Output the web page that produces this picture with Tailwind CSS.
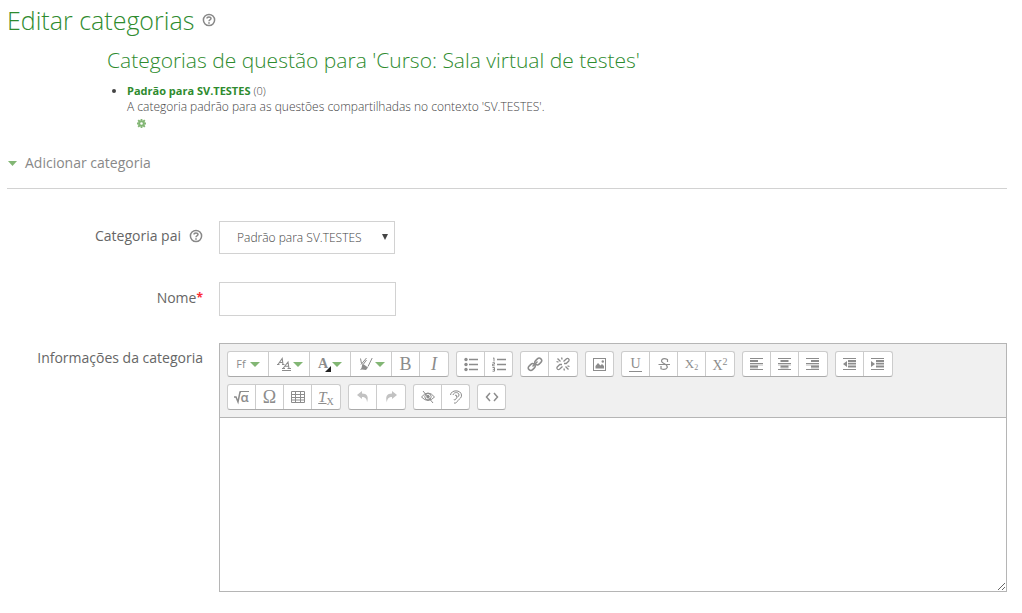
<!DOCTYPE html>
<html lang="pt-BR">
<head>
<meta charset="utf-8">
<meta name="viewport" content="width=device-width, initial-scale=1">
<title>Editar categorias</title>
<script src="https://cdn.jsdelivr.net/npm/@tailwindcss/browser@4"></script>
</head>
<body class="bg-white pl-[7px] pr-[15px] pt-1 font-['Century_Gothic','Open_Sans',sans-serif] font-light text-[#444]">
<svg class="hidden">
  <symbol id="help" viewBox="0 0 14 14"><circle cx="7" cy="7" r="5.600" fill="none" stroke="#888" stroke-width="1.500"/><path d="M5 5.600C5 3.400 9 3.400 9 5.500C9 7 7 6.800 7 8.200" fill="none" stroke="#888" stroke-width="1.500"/><path d="M6.200 9.200h1.600v1.500H6.200z" fill="#888"/></symbol>
</svg>
<main>
  <div class="flex items-center gap-2">
    <h1 class="text-[25px] leading-8 text-[#2e8b2e]">Editar categorias</h1>
    <button type="button" aria-label="Ajuda com Editar categorias"><svg class="size-[14px]"><use href="#help"/></svg></button>
  </div>
  <section class="ml-[100px] mt-2">
    <h2 class="text-[21px] leading-8 text-[#2e8b2e]">Categorias de questão para 'Curso: Sala virtual de testes'</h2>
    <ul class="mt-[7px] list-disc pl-5 text-[12px] leading-4">
      <li><a href="#" class="text-[11px] font-bold text-[#2e8b2e]">Padrão para SV.TESTES</a> <span class="text-[11px]">(0)</span>
        <p>A categoria padrão para as questões compartilhadas no contexto 'SV.TESTES'.</p>
        <a href="#" aria-label="Editar" class="ml-[10px] mt-1 block w-[9px]"><svg class="size-[9px]" viewBox="0 0 9 9"><circle cx="4.500" cy="4.500" r="2.300" fill="none" stroke="#82b674" stroke-width="2"/><path d="M4.500 0v1.800M4.500 7.200V9M0 4.500h1.800M7.200 4.500H9M1.200 1.200l1.300 1.300M6.500 6.500l1.300 1.300M7.800 1.200L6.500 2.500M2.500 6.500L1.200 7.800" stroke="#82b674" stroke-width="1.800"/></svg></a>
      </li>
    </ul>
  </section>
  <form>
    <h3 class="mt-[25px] border-b border-[#d2d2d2] pb-[15px]">
      <button type="button" class="flex items-center gap-2 text-[14px] font-normal leading-5 text-[#888]"><svg class="ml-px h-[5px] w-[9px]" viewBox="0 0 9 5"><path d="M0 0h9L4.500 5z" fill="#82b674"/></svg>Adicionar categoria</button>
    </h3>
    <div class="mt-8 grid grid-cols-[196px_minmax(0,1fr)] gap-x-4 text-[14px] leading-5">
      <div class="flex h-[33px] items-center justify-end gap-2 pb-[3px]">
        <label for="parent" class="font-normal text-[#666]">Categoria pai</label>
        <button type="button" aria-label="Ajuda com Categoria pai"><svg class="size-[14px]"><use href="#help"/></svg></button>
      </div>
      <div class="relative h-[33px] w-[176px]">
        <select id="parent" class="h-full w-full appearance-none border border-[#d2d2d2] bg-white pl-[17px] text-[12px]"><option>Padrão para SV.TESTES</option></select>
        <svg class="pointer-events-none absolute right-[7px] top-[13px] h-[6px] w-[6px]" viewBox="0 0 6 6"><path d="M0 0h6L3 6z" fill="#444"/></svg>
      </div>
      <label for="name" class="mt-7 flex h-[34px] items-center justify-end pb-[3px] font-normal text-[#666]">Nome<span class="text-[12px] font-bold text-red-500">*</span></label>
      <input id="name" type="text" class="mt-7 h-[34px] w-[177px] border border-[#d2d2d2] px-2">
      <label for="info" class="mt-8 text-right font-normal text-[#666]">Informações da categoria</label>
      <div class="mt-[27px] border border-[#b5b5b5]">
        <div class="flex h-[74px] flex-wrap content-start gap-[7px] border-b border-[#b5b5b5] bg-[#f0f0f0] p-[7px] text-[#8c8c8c] [&>div]:flex [&>div]:h-[26px] [&>div]:divide-x [&>div]:divide-[#ccc] [&>div]:rounded-[3px] [&>div]:border [&>div]:border-[#ccc] [&>div]:border-b-[#aaa] [&>div]:bg-white [&_button]:flex [&_button]:w-7 [&_button]:items-center [&_button]:justify-center [&_svg]:h-4 [&_svg]:w-4 [&_svg]:shrink-0 [&_svg]:fill-none [&_svg]:stroke-current">
          <div>
            <button type="button" aria-label="Família de fontes" class="min-w-[41px] gap-1"><span class="text-[11px] font-normal">Ff</span><svg class="max-h-[5px] max-w-[10px]" viewBox="0 0 10 5"><path d="M0 0h10L5 5z" fill="#82b674" stroke="none"/></svg></button>
            <button type="button" aria-label="Tamanho da fonte" class="min-w-[41px] gap-px"><svg class="min-w-[14px]" viewBox="0 0 14 16"><path d="M1 8.500L5.200 2.500l.8 6M2.500 6.500h3.300M0 8.500h2.500M5 8.500h2.500M6 12.500l5-6.500 1 6.500M8 10.200h3.800M5 12.500h3M10.500 12.500H14M5 14.500h9" stroke-width="1.100"/></svg><svg class="max-h-[5px] max-w-[10px]" viewBox="0 0 10 5"><path d="M0 0h10L5 5z" fill="#82b674" stroke="none"/></svg></button>
            <button type="button" aria-label="Cor do texto" class="min-w-[41px] gap-px"><span class="flex items-end font-['Liberation_Serif'] text-[14px] font-bold leading-4">A<svg class="-ml-[3px] max-h-[6px] max-w-[6px]" viewBox="0 0 6 6"><path d="M6 0v6H0z" fill="#222" stroke="none"/></svg></span><svg class="max-h-[5px] max-w-[10px]" viewBox="0 0 10 5"><path d="M0 0h10L5 5z" fill="#82b674" stroke="none"/></svg></button>
            <button type="button" aria-label="Cor de fundo" class="min-w-[41px] gap-px"><svg class="min-w-[14px]" viewBox="0 0 14 16"><path d="M1.500 2.500l1 5M2 8.500L7.500 2M4.500 8l3-4M9 10.500L13.200 2"/><path d="M3.500 7.500l5.500 4L7 14l-4-.5L1 14l1.500-2z" fill="currentColor" stroke="none"/></svg><svg class="max-h-[5px] max-w-[10px]" viewBox="0 0 10 5"><path d="M0 0h10L5 5z" fill="#82b674" stroke="none"/></svg></button>
            <button type="button" class="font-['Liberation_Serif'] text-[18px] font-normal">B</button>
            <button type="button" class="font-['Liberation_Serif'] text-[18px] font-normal italic">I</button>
          </div>
          <div>
            <button type="button" aria-label="Lista com marcadores"><svg viewBox="0 0 16 16"><path d="M6 3.500h9M6 8.500h9M6 13.500h9" stroke-width="1.400"/><g fill="currentColor" stroke="none"><circle cx="3" cy="3.500" r="1.700"/><circle cx="3" cy="8.500" r="1.700"/><circle cx="3" cy="13.500" r="1.700"/></g></svg></button>
            <button type="button" aria-label="Lista numerada" class="max-w-[27px]"><svg viewBox="0 0 16 16"><path d="M6 3.500h9M6 8.500h9M6 13.500h9" stroke-width="1.400"/><path d="M2 2.500l1-.7V5.500M1.500 6.700h2v1.500h-2v1.600h2.200M1.500 11.500h2v3.700h-2M1.800 13.300h1.700"/></svg></button>
          </div>
          <div>
            <button type="button" aria-label="Link"><svg viewBox="0 0 16 16" stroke-width="1.500"><rect x="7.500" y="3" width="7.500" height="5" rx="2.500" transform="rotate(-45 11.250 5.500)"/><rect x="1" y="8.500" width="7.500" height="5" rx="2.500" transform="rotate(-45 4.750 11)"/><path d="M5.500 10.500l5-5"/></svg></button>
            <button type="button" aria-label="Remover link"><svg viewBox="0 0 16 16" stroke-width="1.300"><path d="M8.500 5.500l3-2.700q1-.7 2 0 1.200 1 .3 2.200l-2.600 2.500H9M7.500 10.500l-3 2.700q-1 .7-2 0-1.200-1-.3-2.200l2.600-2.500H7"/><path d="M2.500 2.500l3 3M6.500 1.500l.7 2M1.500 5.500l2 .7M13.500 13.500l-3-3M9.500 14.500l-.7-2M14.500 10.500l-2-.7"/></svg></button>
          </div>
          <div>
            <button type="button" aria-label="Imagem" class="max-w-[27px]"><svg viewBox="0 0 16 16"><rect x="1.500" y="2.500" width="12" height="12"/><path d="M3.500 12.500V10l2.500-3 2.500 2.500L10 8l2 2v2.500z" fill="currentColor" stroke="none"/><circle cx="10.800" cy="5.500" r="1.200" fill="currentColor" stroke="none"/></svg></button>
          </div>
          <div>
            <button type="button" aria-label="Sublinhado"><span class="border-b border-current px-px font-['Liberation_Serif'] text-[14px] font-normal leading-[14px]">U</span></button>
            <button type="button" aria-label="Tachado"><svg viewBox="0 0 16 16"><path d="M11.500 6V3.500Q8 1.700 6 3.500q-1.500 2.500 2 4t3.300 4Q9.500 14.500 5 12.800V10" stroke-width="1.200"/><path d="M2.500 8.500h11.500"/></svg></button>
            <button type="button" aria-label="Subscrito"><span class="font-['Liberation_Serif'] text-[13px] font-normal leading-4">X<sub class="text-[8px]">2</sub></span></button>
            <button type="button" aria-label="Sobrescrito"><span class="flex pt-1 font-['Liberation_Serif'] text-[14px] font-normal leading-4">X<span class="-mt-1 text-[10px] leading-4">2</span></span></button>
          </div>
          <div>
            <button type="button" aria-label="Alinhar à esquerda"><svg viewBox="0 0 16 16"><path d="M1 2.500h13M1 7.500h13M1 13.500h13" stroke-width="1.200"/><path d="M1 5h8M1 10.500h8" stroke-width="2"/><path d="M1 9h13M1 12h8" stroke-width=".6"/></svg></button>
            <button type="button" aria-label="Centralizar"><svg viewBox="0 0 16 16"><path d="M1 2.500h13M1 7.500h13M1 13.500h13" stroke-width="1.200"/><path d="M3.500 5h8M3.500 10.500h8" stroke-width="2"/><path d="M1 9h13M3.500 12h8" stroke-width=".6"/></svg></button>
            <button type="button" aria-label="Alinhar à direita"><svg viewBox="0 0 16 16"><path d="M1 2.500h13M1 7.500h13M1 13.500h13" stroke-width="1.200"/><path d="M6 5h8M6 10.500h8" stroke-width="2"/><path d="M1 9h13M6 12h8" stroke-width=".6"/></svg></button>
          </div>
          <div>
            <button type="button" aria-label="Diminuir recuo"><svg viewBox="0 0 16 16"><path d="M1 2.500h13M1 13.500h13" stroke-width="1.200"/><path d="M6 5h8M6 7.700h8M6 10.500h8" stroke-width="1.800"/><path d="M5 5v6L1 8z" fill="currentColor" stroke="none"/></svg></button>
            <button type="button" aria-label="Aumentar recuo"><svg viewBox="0 0 16 16"><path d="M1 2.500h13M1 13.500h13" stroke-width="1.200"/><path d="M6 5h8M6 7.700h8M6 10.500h8" stroke-width="1.800"/><path d="M1 5v6l4-3z" fill="currentColor" stroke="none"/></svg></button>
          </div>
          <div>
            <button type="button" aria-label="Editor de equações" class="text-[13px] font-semibold"><svg class="-mr-px max-w-[7px]" viewBox="0 0 7 16"><path d="M0 8h2l2 5L6 3h1" stroke-width="1.500"/></svg><span class="border-t border-current leading-[11px]">α</span></button>
            <button type="button" aria-label="Caractere especial"><span class="font-['Liberation_Serif'] text-[18px] font-normal">Ω</span></button>
            <button type="button" aria-label="Tabela"><svg viewBox="0 0 16 16"><path d="M1.500 2.500h13v11h-13zM1.500 5.500h13M1.500 8.500h13M1.500 11h13M5.500 2.500v11M10.500 2.500v11"/></svg></button>
            <button type="button" aria-label="Limpar formatação"><span class="font-['Liberation_Serif'] text-[15px] font-normal leading-4"><i class="underline">T</i><sub class="text-[10px]">X</sub></span></button>
          </div>
          <div class="text-[#c2c2c2]">
            <button type="button" aria-label="Desfazer"><svg viewBox="0 0 16 16"><path d="M2 6l5-4v2.500c5 0 7 3 5 9 0-4-2-5.500-5-5.500V10z" fill="currentColor" stroke="none"/></svg></button>
            <button type="button" aria-label="Refazer"><svg viewBox="0 0 16 16"><path d="M14 6L9 2v2.500c-5 0-7 3-5 9 0-4 2-5.500 5-5.500V10z" fill="currentColor" stroke="none"/></svg></button>
          </div>
          <div>
            <button type="button" aria-label="Verificador de acessibilidade"><svg viewBox="0 0 16 16"><path d="M1.500 8Q8 0 14.500 8Q8 15 1.500 8zM3 2l10 12"/><circle cx="8" cy="7.700" r="3.200"/><circle cx="8" cy="7.700" r="1.300" fill="currentColor"/></svg></button>
            <button type="button" aria-label="Auxiliar de leitor de tela" class="max-w-[27px]"><svg viewBox="0 0 16 16"><path d="M2.500 6C3 .5 13 .5 13.500 6c.3 3-2 3.500-3.500 5.500s-2 3-4 2.500M5 6c1-3.500 6-3 6 0 0 2.500-3 1.500-3 4-1 1.500-2 1-2 0M7 6.500c1.500-1 2 0 1.500 1.500"/></svg></button>
          </div>
          <div>
            <button type="button" aria-label="HTML" class="max-w-[27px]"><svg viewBox="0 0 16 16"><path d="M6 4L2.500 8 6 12M10 4l3.500 4L10 12" stroke-width="1.500"/></svg></button>
          </div>
        </div>
        <textarea id="info" class="block h-[173px] w-full resize-y bg-white p-2 text-[13px] outline-none"></textarea>
      </div>
    </div>
  </form>
</main>
</body>
</html>
